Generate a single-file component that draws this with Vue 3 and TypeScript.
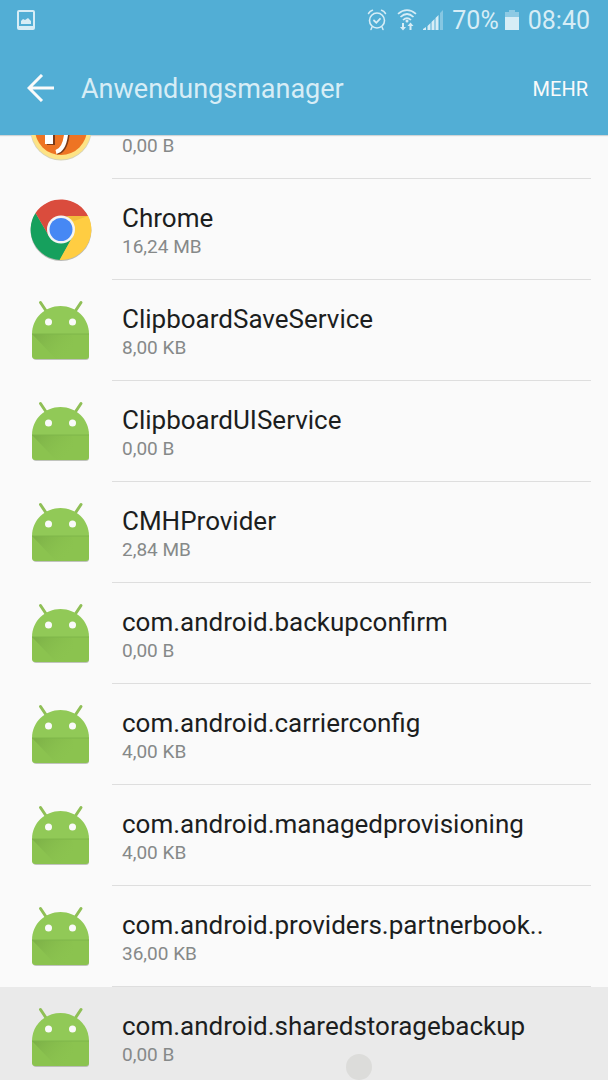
<script setup lang="ts">
import { ref } from 'vue'

type IconKind = 'fonts' | 'chrome' | 'android'

interface AppEntry {
  name: string
  size: string
  icon: IconKind
}

const batteryLevel = 70
const clock = '08:40'
const pressed = ref(9)

const apps: AppEntry[] = [
  { name: '', size: '0,00 B', icon: 'fonts' },
  { name: 'Chrome', size: '16,24 MB', icon: 'chrome' },
  { name: 'ClipboardSaveService', size: '8,00 KB', icon: 'android' },
  { name: 'ClipboardUIService', size: '0,00 B', icon: 'android' },
  { name: 'CMHProvider', size: '2,84 MB', icon: 'android' },
  { name: 'com.android.backupconfirm', size: '0,00 B', icon: 'android' },
  { name: 'com.android.carrierconfig', size: '4,00 KB', icon: 'android' },
  { name: 'com.android.managedprovisioning', size: '4,00 KB', icon: 'android' },
  { name: 'com.android.providers.partnerbook..', size: '36,00 KB', icon: 'android' },
  { name: 'com.android.sharedstoragebackup', size: '0,00 B', icon: 'android' },
]
</script>

<template>
  <div class="screen">
    <header class="top">
      <div class="status">
        <svg class="shot" viewBox="0 0 20 20" aria-hidden="true">
          <rect x="2" y="1" width="16" height="18" rx="1" fill="none" stroke="currentColor" stroke-width="2" />
          <path d="M2 16h16v2H2z" fill="currentColor" />
          <path d="M5 14v-3l2-2 2 1 3-2 3 3v3z" fill="currentColor" />
        </svg>
        <div class="indicators">
          <svg class="alarm" viewBox="0 0 20 22" aria-hidden="true" fill="none" stroke="currentColor" stroke-linecap="round">
            <circle cx="10" cy="11.5" r="7.5" stroke-width="1.6" />
            <path d="M7 11.500l2.300 2.300L13 9.800" stroke-width="1.800" />
            <path d="M1.500 4.500Q3 2 5.500 1.300M18.500 4.500Q17 2 14.500 1.300M5 18l-1 2.500M15 18l1 2.500" stroke-width="1.500" />
          </svg>
          <svg class="wifi" viewBox="0 0 20 22" aria-hidden="true">
            <g fill="none" stroke="currentColor" stroke-width="1.7">
              <path d="M1 4.800Q10-2.500 19 4.800" />
              <path d="M3.500 8Q10 2 16.500 8" />
              <path d="M6 11Q10 7 14 11" />
            </g>
            <circle cx="10" cy="12" r="1.500" fill="currentColor" />
            <path d="M5 14h2v4h2l-3 3.500L3 18h2zM12.500 21h2v-4h2l-3-3.500-3 3.500h2z" fill="currentColor" />
          </svg>
          <svg class="signal" viewBox="0 0 20 20" aria-hidden="true" fill="currentColor">
            <path d="M0 20v-1l3-2v3zM4.500 20v-4l3-3v7zM8.500 20v-8l3-3v11zM12.500 20V8l3-3v15z" />
            <path d="M17 20V3l3-3v20z" opacity=".4" />
          </svg>
          <span class="reading">{{ batteryLevel }}%</span>
          <svg class="battery" viewBox="0 0 14 20" aria-hidden="true" fill="currentColor">
            <path d="M0 2h4V0h6v2h4v5H0z" opacity=".45" />
            <path d="M0 7h14v13H0z" />
          </svg>
          <span class="reading">{{ clock }}</span>
        </div>
      </div>
      <div class="bar">
        <button class="back" type="button" aria-label="Zurück">
          <svg viewBox="0 0 28 28" aria-hidden="true">
            <path d="M15 1L2 14l13 13M2 14h25" fill="none" stroke="currentColor" stroke-width="3" />
          </svg>
        </button>
        <h1>Anwendungsmanager</h1>
        <button class="more" type="button">MEHR</button>
      </div>
    </header>

    <main class="viewport">
      <ul class="list">
        <li v-for="(app, index) in apps" :key="index" :class="{ pressed: index === pressed }">
          <button class="row" type="button" @click="pressed = index">
            <svg v-if="app.icon === 'android'" class="icon" viewBox="0 0 64 64" aria-hidden="true">
              <path d="M4 38v20q0 3 3 3h50q3 0 3-3V38z" fill="#9a9f95" opacity=".6" />
              <path d="M11.500 3.500l6 9M52 3.500l-6 9" stroke="#8fbf56" stroke-width="3" stroke-linecap="round" />
              <path d="M3 35C3 19 16 7 31.500 7S60 19 60 35z" fill="#91c957" />
              <path d="M3 35h57v22q0 3-3 3H6q-3 0-3-3z" fill="#8bc34f" />
              <path d="M3 35l24 25h20L43 35z" fill="url(#fold)" />
              <path d="M3 35h57" stroke="#7fb64a" />
              <circle cx="19.500" cy="23" r="3.500" fill="#fafafa" />
              <circle cx="43.500" cy="23" r="3.500" fill="#fafafa" />
            </svg>
            <svg v-else-if="app.icon === 'chrome'" class="icon" viewBox="0 0 64 64" aria-hidden="true">
              <circle cx="32" cy="32.500" r="30.500" fill="#b9b9b5" />
              <path d="M6.500 15A30.500 30.500 0 0 0 31 62L44 38 20 38z" fill="#16a05d" />
              <path d="M32 18h27.200A30.500 30.500 0 0 1 30.500 62L44 38z" fill="#ffcd42" />
              <path d="M6.500 15L20 38l20-20h19A30.500 30.500 0 0 0 6.500 15z" fill="#da4c3d" />
              <path d="M37 18h22l-14 5z" fill="#f2bc3c" />
              <circle cx="32" cy="31.500" r="14" fill="#f4f4f4" />
              <circle cx="32" cy="31.500" r="11.500" fill="#4688f4" />
            </svg>
            <svg v-else class="icon" viewBox="0 0 64 64" aria-hidden="true">
              <circle cx="32" cy="33" r="30.500" fill="#d6d2b8" />
              <circle cx="32" cy="32.500" r="30" fill="#fde385" />
              <circle cx="32" cy="32" r="26" fill="#ee7423" />
              <path d="M18 10h8v38h-8z" fill="#7b3a18" />
              <path d="M16 10h8v37h-8z" fill="#fff" />
              <path d="M40 12l-1 26q-2 17-11 18" fill="none" stroke="#7b3a18" stroke-width="3" />
              <path d="M38 12l-1 26q-2 15-10 17" fill="none" stroke="#fff" stroke-width="4" />
            </svg>
            <span class="info">
              <span class="name">{{ app.name }}</span>
              <span class="size">{{ app.size }}</span>
            </span>
          </button>
        </li>
      </ul>
      <span class="touch" aria-hidden="true"></span>
    </main>

    <svg class="defs" width="0" height="0" aria-hidden="true">
      <linearGradient id="fold" x1="0" y1="0" x2="1" y2="0.500">
        <stop offset="0" stop-color="#6fa040" stop-opacity=".6" />
        <stop offset="1" stop-color="#8bc34f" stop-opacity="0" />
      </linearGradient>
    </svg>
  </div>
</template>

<style>
body {
  margin: 0;
  background: #fafafa;
}
</style>

<style scoped>
.screen {
  display: flex;
  flex-direction: column;
  height: 100vh;
  overflow: hidden;
  background: #fafafa;
  color: #1c1e1e;
  font-family: Roboto, "Noto Sans", sans-serif;
}
button {
  padding: 0;
  border: 0;
  background: none;
  color: inherit;
  font: inherit;
  cursor: pointer;
}
.top {
  position: relative;
  flex: none;
  background: #52aed5;
  color: #fafafa;
  box-shadow: 0 1px 1px #d0d4d6;
}
.status {
  display: flex;
  align-items: center;
  justify-content: space-between;
  height: 40px;
  padding: 0 18px 0 16px;
  color: #d7edf6;
}
.shot {
  width: 20px;
  height: 20px;
}
.indicators {
  display: flex;
  align-items: center;
}
.alarm,
.wifi {
  width: 20px;
  height: 22px;
  margin-right: 10px;
}
.wifi {
  margin-right: 6px;
}
.signal {
  width: 20px;
  height: 20px;
  margin-right: 9px;
}
.reading {
  padding-top: 2px;
  font-size: 25px;
  line-height: 38px;
}
.battery {
  width: 14px;
  height: 20px;
  margin: 0 9px 0 6px;
}
.bar {
  display: flex;
  align-items: center;
  height: 95px;
  padding: 0 20px 0 27px;
}
.back {
  display: flex;
}
.back svg {
  width: 28px;
  height: 28px;
}
h1 {
  flex: 1;
  margin: 0 0 0 26px;
  padding-top: 2px;
  color: #d7edf6;
  font-size: 27px;
  font-weight: 400;
  line-height: 32px;
}
.more {
  padding-top: 2px;
  font-size: 20px;
  line-height: 32px;
}
.viewport {
  position: relative;
  flex: 1;
  min-height: 0;
  overflow: hidden;
}
.list {
  margin: -57px 0 0;
  padding: 0;
  list-style: none;
}
.row {
  display: flex;
  align-items: center;
  width: 100%;
  height: 101px;
  padding: 0 17px 0 29px;
  text-align: left;
}
.pressed {
  background: #eaeaea;
}
.icon {
  flex: none;
  width: 64px;
  height: 64px;
  margin-right: 19px;
}
.info {
  display: flex;
  flex: 1;
  flex-direction: column;
  justify-content: center;
  gap: 2px;
  box-sizing: border-box;
  min-width: 0;
  height: 101px;
  padding: 2px 0 0 10px;
  border-bottom: 1px solid #dedede;
}
.name {
  min-height: 32px;
  overflow: hidden;
  font-size: 26px;
  line-height: 32px;
  white-space: nowrap;
}
.size {
  color: #868989;
  font-size: 19px;
  line-height: 22px;
}
.touch {
  position: absolute;
  bottom: 0;
  left: 59%;
  width: 26px;
  height: 26px;
  border-radius: 50%;
  background: #dcdcda;
  transform: translateX(-50%);
}
.defs {
  position: absolute;
}
</style>
